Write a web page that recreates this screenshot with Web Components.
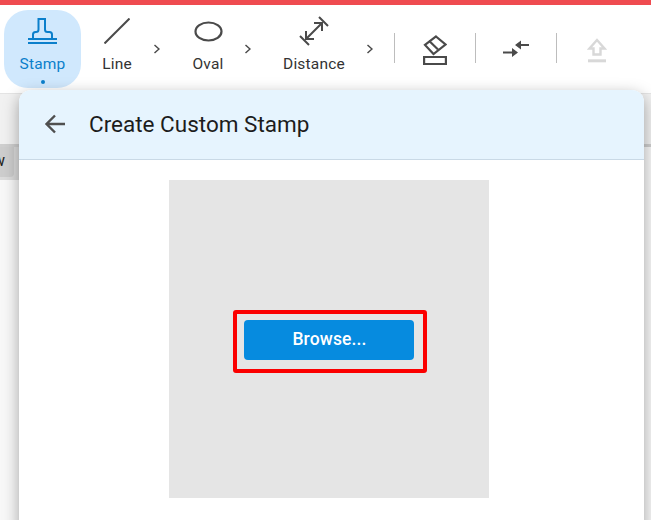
<!DOCTYPE html>
<html><head><meta charset="utf-8"><style>
html,body{margin:0;padding:0;width:651px;height:520px;overflow:hidden;background:#fff;font-family:Roboto,"Liberation Sans",sans-serif}
</style></head><body>
<app-screen></app-screen>
<script>
const D='#4a4a4a';
const ICONS={
stamp:`<svg width="29" height="27" viewBox="0 0 29 27" fill="none" stroke="#0b7fcb" stroke-width="2"><path d="M10.500 1h6.500v10.500c0 1.500.8 2.500 2.500 2.500h2c1.500 0 2.500 1 2.500 2.500V21H5v-4.500C5 15 6 14 7.500 14h.5c1.500 0 2.500-1 2.500-2.500z"/><path d="M0 21h29M0 25h29"/></svg>`,
line:`<svg width="26" height="26" viewBox="0 0 26 26" fill="none" stroke="${D}" stroke-width="2"><path d="M.5 25.500 25.500.5"/></svg>`,
oval:`<svg width="29" height="21" viewBox="0 0 29 21" fill="none" stroke="${D}" stroke-width="2.200"><ellipse cx="14.500" cy="10.500" rx="13" ry="9"/></svg>`,
dist:`<svg width="30" height="30" viewBox="0 0 30 30" fill="none" stroke="${D}" stroke-width="2"><path d="M1 20l9 9M20 1l9 9M7 23 23 7M15 7h8v8M15 23H7v-8"/></svg>`,
erase:`<svg width="24" height="30" viewBox="0 0 24 30" fill="none" stroke="${D}" stroke-width="2.200"><path d="M13 1.500 22.500 9.500 10.500 19 2 10z"/><path d="M6 5.800 15 14.500"/><path d="M1.100 22h21.800v7H1.100z"/></svg>`,
swap:`<svg width="26" height="18" viewBox="0 0 26 18" fill="none" stroke="${D}" stroke-width="2"><path d="M18 5h8M0 12.500h9"/><path d="M12 5 18 .5v9zM15 12.500 9 8v9z" fill="${D}" stroke="none"/></svg>`,
up:`<svg width="20" height="25" viewBox="0 0 20 25" fill="none" stroke="#d8d8d8" stroke-width="2.400"><path d="M10 2 2.500 10.500H6.500V16.500h7v-6h4z"/><path d="M1 22.800h18" stroke-width="3"/></svg>`,
chev:`<svg width="6" height="10" viewBox="0 0 6 10" fill="none" stroke="${D}" stroke-width="1.500"><path d="M.5 1l4.500 4-4.500 4"/></svg>`,
back:`<svg width="21" height="20" viewBox="0 0 21 20" fill="none" stroke="#4f4f4f" stroke-width="2.400"><path d="M21 10H2.500M11 1.500 2.500 10l8.500 8.500"/></svg>`};
for(const k in ICONS)ICONS[k]=ICONS[k].replace('<svg ','<svg style="display:block" ');
function def(name,css,html){customElements.define(name,class extends HTMLElement{constructor(){super();this.attachShadow({mode:'open'}).innerHTML='<style>'+css+'</style>'+html}})}
def('tool-item',`:host{display:flex;flex-direction:column;align-items:center;box-sizing:border-box;height:78px;padding-top:3px;color:#333;font-size:15.500px;position:relative}
:host([active]){background:#d0e8fd;border-radius:24px;color:#0b7fcb}
.i{height:36px;display:flex;align-items:center;justify-content:center}
.l{margin-top:5px;line-height:20px;letter-spacing:.2px}
:host([active])::after{content:"";position:absolute;left:50%;margin-left:-2px;top:70px;width:4px;height:4px;border-radius:50%;background:#0b7fcb}`,
'<div class="i"><slot name="icon"></slot></div><div class="l"><slot></slot></div>');
def('tool-bar',`:host{display:block;height:93px;border-top:5px solid #ef4b50;box-sizing:border-box;background:#fff}
.r{display:flex;align-items:flex-start;padding:5px 0 0 4px}`,'<div class="r"><slot></slot></div>');
def('tool-btn',`:host{display:flex;align-items:center;justify-content:center;width:80px;height:36px;margin-top:22px}`,'<slot></slot>');
def('tool-sep',`:host{display:block;width:1px;height:30px;background:#bdbdbd;margin-top:23px}`,'');
def('tool-chev',`:host{display:flex;margin-top:34px}`,'<slot></slot>');
def('dialog-panel',`:host{display:block;position:absolute;left:19px;top:90px;width:625px;height:440px;background:#fff;border-radius:12px 12px 0 0;box-shadow:0 5px 16px rgba(0,0,0,.35);overflow:hidden}
.h{display:flex;align-items:center;box-sizing:border-box;height:70px;padding:0 0 2px 25px;background:#e6f4fe;border-bottom:1px solid #c9d9e6;gap:24px;font-size:22.500px;color:#1c1c1c}
.b{display:flex;justify-content:center;padding:20px 5px 0 0}`,
'<div class="h"><slot name="back"></slot><slot name="title"></slot></div><div class="b"><slot></slot></div>');
def('drop-area',`:host{display:flex;align-items:center;justify-content:center;box-sizing:border-box;width:320px;height:318px;padding-top:2px;background:#e5e5e5}`,'<slot></slot>');
def('browse-button',`:host{display:block;position:relative;width:170px;height:40px;background:#068bdf;border-radius:4px;color:#fff;font-size:17.500px;font-weight:500;letter-spacing:.15px;text-indent:1px;text-align:center;line-height:38px}
:host::after{content:"";position:absolute;left:-11px;top:-10px;width:186px;height:55px;border:4px solid #fb0000;border-radius:3px}`,'<slot></slot>');
def('page-back',`:host{display:block;height:427px;background:#f8f8f8;color:#222}
.s{height:51px;background:#f1f1f1;border-top:1px solid #e4e4e4;box-sizing:border-box}
.line{height:3px;background:#cfcfcf}
.wrap{width:19px;height:33px;background:#dcdcdc}
.b{box-sizing:border-box;width:14px;height:30px;padding-right:9px;line-height:28px;background:#cdcdcd;border-radius:0 0 4px 0;overflow:hidden;display:flex;justify-content:flex-end;font-size:16px;white-space:nowrap}`,
'<div class="s"></div><div class="line"></div><div class="wrap"><div class="b"><slot></slot></div></div>');
def('app-screen',`:host{display:block;width:651px;height:520px;position:relative;overflow:hidden}`,
`<tool-bar>
<tool-item active style="width:77px"><span slot="icon">${ICONS.stamp}</span>Stamp</tool-item>
<tool-item style="width:72px"><span slot="icon">${ICONS.line}</span>Line</tool-item>
<tool-chev style="margin-left:1px">${ICONS.chev}</tool-chev>
<tool-item style="width:74px;margin-left:11px"><span slot="icon">${ICONS.oval}</span>Oval</tool-item>
<tool-chev>${ICONS.chev}</tool-chev>
<tool-item style="width:106px;margin-left:10px"><span slot="icon">${ICONS.dist}</span>Distance</tool-item>
<tool-chev>${ICONS.chev}</tool-chev>
<tool-sep style="margin-left:21px"></tool-sep>
<tool-btn>${ICONS.erase}</tool-btn><tool-sep></tool-sep>
<tool-btn style="padding-bottom:3px;box-sizing:border-box">${ICONS.swap}</tool-btn><tool-sep></tool-sep>
<tool-btn>${ICONS.up}</tool-btn>
</tool-bar>
<page-back><span>w</span></page-back>
<dialog-panel><span slot="back">${ICONS.back}</span><span slot="title">Create Custom Stamp</span>
<drop-area><browse-button>Browse...</browse-button></drop-area></dialog-panel>`);
</script>
</body></html>
